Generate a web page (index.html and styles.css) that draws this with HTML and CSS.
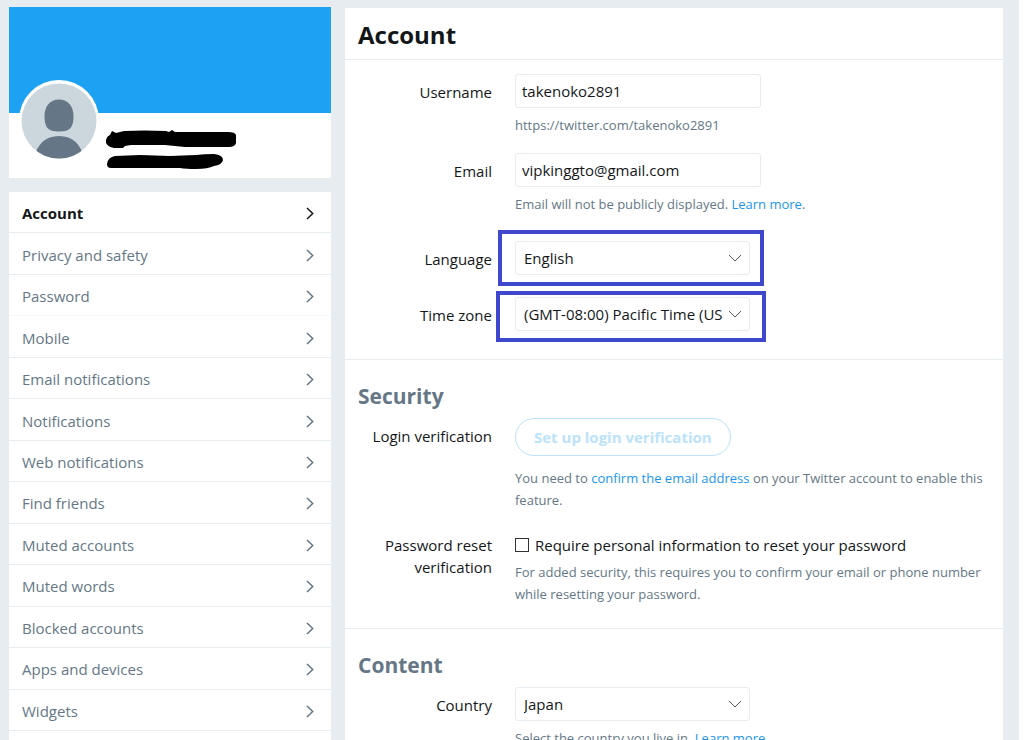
FILE: index.html
```html
<!DOCTYPE html>
<html lang="en">
<head>
    <meta charset="UTF-8">
    <meta name="viewport" content="width=device-width, initial-scale=1.0">
    <title>Account settings</title>
    <link rel="stylesheet" href="styles.css">
</head>
<body>
    <!-- chevron used by every menu row -->
    <svg class="defs" width="0" height="0" aria-hidden="true">
        <symbol id="chevron" viewBox="0 0 8 13">
            <path d="M1 1l5.700 5.500L1 12" fill="none" stroke="currentColor" stroke-width="1.500"/>
        </symbol>
    </svg>
    <div class="page">
        <aside class="sidebar">
            <div class="card profile">
                <div class="banner"></div>
                <div class="profile-body">
                    <svg class="avatar" viewBox="0 0 82 82" aria-hidden="true">
                        <clipPath id="face"><circle cx="41" cy="42" r="37.500"/></clipPath>
                        <circle cx="41" cy="41" r="40" fill="#fff"/>
                        <circle cx="41" cy="42" r="37.500" fill="#ccd6dd"/>
                        <g fill="#657786" clip-path="url(#face)">
                            <path d="M41 20.500c9 0 14.500 7 14.500 16.500 0 11-3 15.500-14.500 15.500s-14.500-4.500-14.500-15.500C26.500 27.500 32 20.500 41 20.500z"/>
                            <path d="M16 81c2-15 11-24 25-24s23 9 25 24z"/>
                        </g>
                    </svg>
                    <svg class="scribble" viewBox="0 0 132 40" aria-hidden="true">
                        <path d="M0 10Q1 6 4 5l2-4 4 2 8-2q20-1 42 0l3 1 3-2 3 2h53q7 0 8 3v8q-1 4-7 4H79l-20-2H25l-6 1-2 2H8q-6-1-8-5z"/>
                        <path d="M1 34q1-7 8-8l25-1 30 1 26-1q8-1 18-1 9 1 9 6-1 5-9 6-6 3-18 3-10 0-16-1H5q-4 0-4-4z"/>
                    </svg>
                </div>
            </div>
            <nav class="card menu">
                <ul>
                    <li><a class="active" href="#">Account <svg><use href="#chevron"/></svg></a></li>
                    <li><a href="#">Privacy and safety <svg><use href="#chevron"/></svg></a></li>
                    <li class="faint"><a href="#">Password <svg><use href="#chevron"/></svg></a></li>
                    <li><a href="#">Mobile <svg><use href="#chevron"/></svg></a></li>
                    <li><a href="#">Email notifications <svg><use href="#chevron"/></svg></a></li>
                    <li><a href="#">Notifications <svg><use href="#chevron"/></svg></a></li>
                    <li><a href="#">Web notifications <svg><use href="#chevron"/></svg></a></li>
                    <li><a href="#">Find friends <svg><use href="#chevron"/></svg></a></li>
                    <li><a href="#">Muted accounts <svg><use href="#chevron"/></svg></a></li>
                    <li><a href="#">Muted words <svg><use href="#chevron"/></svg></a></li>
                    <li><a href="#">Blocked accounts <svg><use href="#chevron"/></svg></a></li>
                    <li><a href="#">Apps and devices <svg><use href="#chevron"/></svg></a></li>
                    <li><a href="#">Widgets <svg><use href="#chevron"/></svg></a></li>
                </ul>
            </nav>
        </aside>

        <main class="card content">
            <header class="title">
                <h1>Account</h1>
            </header>
            <form>
                <section class="basics">
                    <div class="row">
                        <label class="name" for="username">Username</label>
                        <div class="field">
                            <input class="text" type="text" id="username" value="takenoko2891">
                            <p class="help">https://twitter.com/takenoko2891</p>
                        </div>
                    </div>
                    <div class="row">
                        <label class="name" for="email">Email</label>
                        <div class="field">
                            <input class="text" type="text" id="email" value="vipkinggto@gmail.com">
                            <p class="help">Email will not be publicly displayed. <a href="#">Learn more</a>.</p>
                        </div>
                    </div>
                    <div class="row language">
                        <label class="name" for="language">Language</label>
                        <div class="field">
                            <div class="select marked">
                                <select id="language"><option>English</option></select>
                                <svg viewBox="0 0 14 8"><path d="M1 1l6 6 6-6"/></svg>
                            </div>
                        </div>
                    </div>
                    <div class="row zone">
                        <label class="name" for="zone">Time zone</label>
                        <div class="field">
                            <div class="select marked wide">
                                <select id="zone"><option>(GMT-08:00) Pacific Time (US &amp; Canada)</option></select>
                                <svg viewBox="0 0 14 8"><path d="M1 1l6 6 6-6"/></svg>
                            </div>
                        </div>
                    </div>
                </section>

                <section class="security">
                    <h2>Security</h2>
                    <div class="row login">
                        <span class="name" id="login-label">Login verification</span>
                        <div class="field">
                            <button type="button" class="outline" aria-describedby="login-label" disabled>Set up login verification</button>
                            <p class="help">You need to <a href="#">confirm the email address</a> on your Twitter account to enable this feature.</p>
                        </div>
                    </div>
                    <div class="row reset">
                        <span class="name">Password reset verification</span>
                        <div class="field">
                            <label class="check"><input type="checkbox"> Require personal information to reset your password</label>
                            <p class="help">For added security, this requires you to confirm your email or phone number while resetting your password.</p>
                        </div>
                    </div>
                </section>

                <section class="country">
                    <h2>Content</h2>
                    <div class="row">
                        <label class="name" for="country">Country</label>
                        <div class="field">
                            <div class="select">
                                <select id="country"><option>Japan</option></select>
                                <svg viewBox="0 0 14 8"><path d="M1 1l6 6 6-6"/></svg>
                            </div>
                            <p class="help">Select the country you live in. <a href="#">Learn more</a>.</p>
                        </div>
                    </div>
                </section>
            </form>
        </main>
    </div>
</body>
</html>
```

FILE: styles.css
```css
*{
    margin: 0;
    padding: 0;
    box-sizing: border-box;
}
html{
    scrollbar-width: none;
    background-color: #fff;
}
body{
    height: 100vh;
    overflow: hidden;
    font-family: "Open Sans", "Noto Sans", sans-serif;
    font-size: 15px;
    line-height: 22px;
    color: #14171a;
    background-color: #e6ecf0;
    border-right: 5px solid #fff;
}
a{
    color: #1b95f0;
    text-decoration: none;
}
.defs{
    position: absolute;
}
.page{
    display: flex;
    align-items: flex-start;
    gap: 14px;
    padding: 7px 16px 0 9px;
}
.card{
    background-color: #fff;
}

/* left column */
.sidebar{
    flex: 0 0 322px;
    display: flex;
    flex-direction: column;
    gap: 14px;
}
.banner{
    height: 106px;
    background-color: #1da1f2;
}
.profile-body{
    display: flex;
    align-items: flex-start;
    height: 65px;
    padding-left: 9px;
}
.avatar{
    width: 82px;
    height: 82px;
    margin-top: -34px;
}
.scribble{
    width: 132px;
    height: 40px;
    margin: 17px 0 0 6px;
}
.menu{
    padding-bottom: 20px;
}
.menu ul{
    display: grid;
    grid-auto-rows: 1fr;
    height: 539px;
    list-style: none;
}
.menu li{
    border-bottom: 1px solid #e6ecf0;
}
.menu .faint{
    border-color: #f7f9fa;
}
.menu a{
    display: flex;
    align-items: center;
    justify-content: space-between;
    height: 100%;
    padding: 2px 17px 0 13px;
    color: #657786;
}
.menu svg{
    width: 8px;
    height: 13px;
    margin-top: 1px;
}
.menu .active{
    color: #14171a;
    font-weight: bold;
}

/* settings form */
.content{
    flex: 1;
    margin-top: 1px;
    min-height: 760px;
}
.title{
    padding: 15px 13px 12px;
    border-bottom: 1px solid #e6ecf0;
}
.title h1{
    font-size: 24px;
    line-height: 24px;
}
section{
    padding: 0 13px;
    border-bottom: 1px solid #e6ecf0;
}
h2{
    font-size: 21px;
    line-height: 28px;
    color: #657786;
}
.row{
    display: grid;
    grid-template-columns: 134px 1fr;
    column-gap: 23px;
}
.name{
    padding-top: 7px;
    text-align: right;
}
.text,
select{
    display: block;
    height: 34px;
    font: inherit;
    color: #14171a;
    background-color: #fff;
    border: 1px solid #e6ecf0;
    border-radius: 3px;
}
.text{
    width: 246px;
    padding: 0 6px;
}
.select{
    position: relative;
    width: 235px;
}
.select select{
    width: 100%;
    padding: 0 26px 0 8px;
    appearance: none;
}
.select svg{
    position: absolute;
    top: 13px;
    right: 8px;
    width: 14px;
    height: 8px;
    fill: none;
    stroke: #555;
    pointer-events: none;
}
/* blue frame round a select */
.marked::after{
    content: "";
    position: absolute;
    inset: -11px -14px -11px -17px;
    border: 4px solid #3f48cc;
    pointer-events: none;
}
.wide::after{
    inset: -6px -16px -11px -19px;
}
.help{
    padding: 6px 0 17px;
    font-size: 13px;
    color: #657786;
}
.basics{
    padding-top: 14px;
    padding-bottom: 28px;
}
.language{
    padding-top: 9px;
}
.zone{
    padding-top: 22px;
}
.security{
    padding-top: 22px;
    padding-bottom: 6px;
}
.login .name{
    padding-top: 15px;
}
.outline{
    display: block;
    height: 38px;
    margin-top: 8px;
    padding: 0 18px;
    font: inherit;
    font-weight: bold;
    color: #bbe3fb;
    background-color: #fff;
    border: 1px solid #bbe3fb;
    border-radius: 19px;
}
.login .help{
    padding-top: 11px;
}
.reset{
    padding-top: 6px;
}
.reset .name{
    padding-top: 0;
}
.check{
    display: flex;
    align-items: center;
    gap: 6px;
}
.check input{
    width: 14px;
    height: 14px;
    appearance: none;
    border: 1px solid #333;
}
.check input:checked{
    background-color: #1da1f2;
}
.reset .help{
    padding-top: 5px;
}
.country{
    padding-top: 22px;
}
.country .row{
    padding-top: 8px;
}
```
